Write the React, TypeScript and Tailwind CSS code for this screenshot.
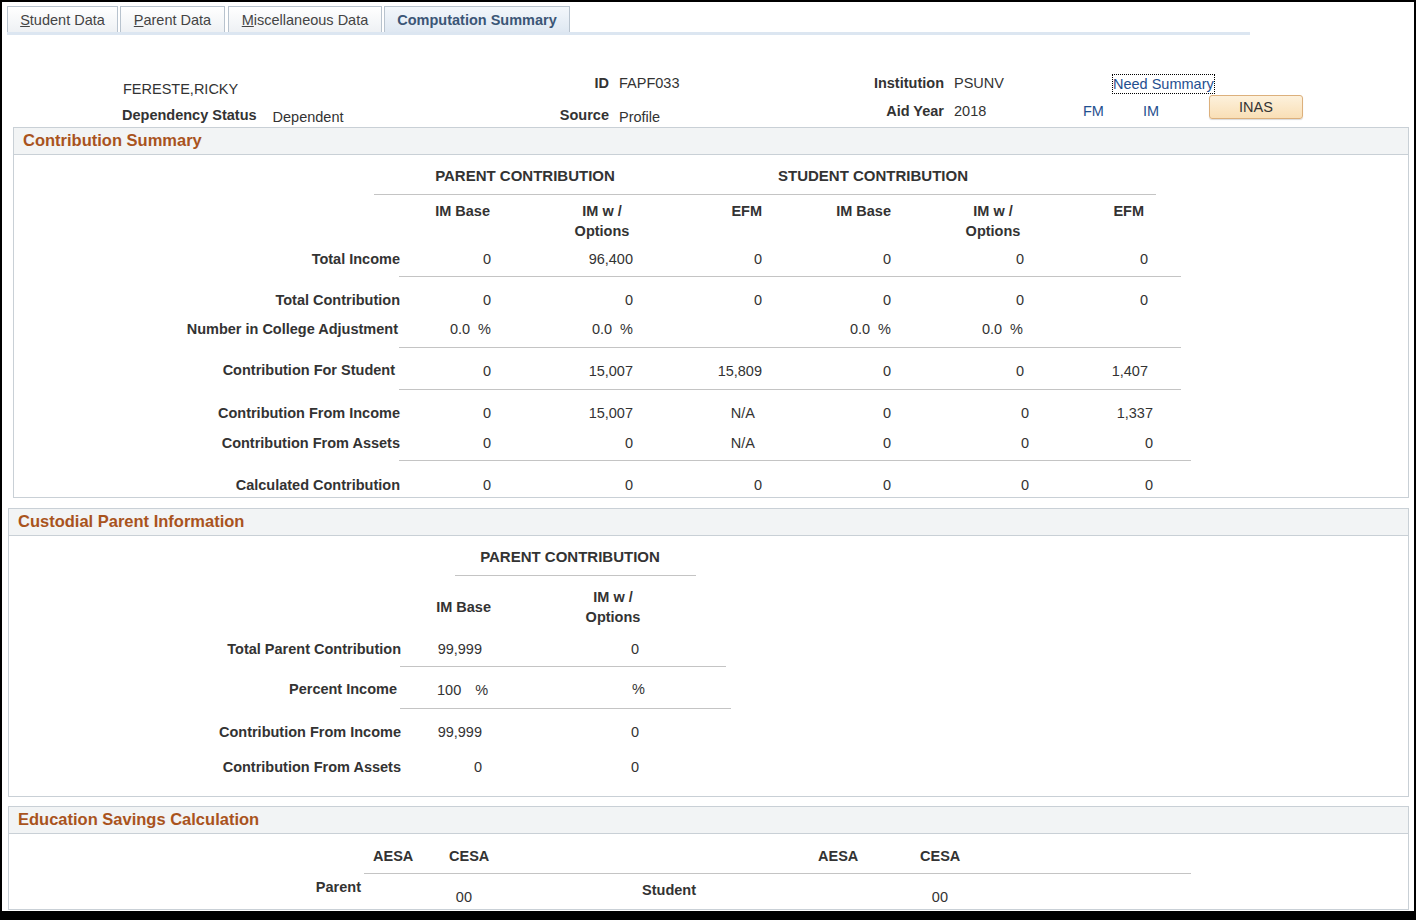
import type { ReactNode } from 'react'

/**
 * Computation Summary page — PeopleSoft style financial aid summary.
 * Tabs, header info, then three bordered sections with right aligned grids.
 */

const CS_COLS = ['w-[91px]', 'w-[142px]', 'w-[129px]', 'w-[129px]', 'w-[133px]', 'w-[124px]']
const CS_COLS_WIDE = ['w-[91px]', 'w-[142px]', 'w-[129px]', 'w-[129px]', 'w-[138px]', 'w-[124px]']

function Section({ title, className, children }: { title: string; className: string; children: ReactNode }) {
  return (
    <section className={`border border-[#c9d0d6] ${className}`}>
      <div className="flex h-[27px] items-center border-b border-[#c9d0d6] bg-[#f2f4f5] pb-[2px] pl-[9px] text-[16.5px] font-bold text-[#a9531d]">
        {title}
      </div>
      {children}
    </section>
  )
}

function CsRow({
  label,
  values,
  cols = CS_COLS,
  labelClass = '',
  className = '',
}: {
  label: string
  values: ReactNode[]
  cols?: string[]
  labelClass?: string
  className?: string
}) {
  return (
    <div className={`flex h-5 items-center leading-5 ${className}`}>
      <div className={`w-[386px] text-right font-bold ${labelClass}`}>{label}</div>
      {values.map((v, i) => (
        <div key={i} className={`${cols[i]} whitespace-nowrap text-right`}>
          {v}
        </div>
      ))}
    </div>
  )
}

function Pct({ v }: { v: string }) {
  return (
    <>
      <span>{v}</span>
      <span className="ml-2">%</span>
    </>
  )
}

function Rule({ className }: { className: string }) {
  return <div className={`border-t border-[#c4c4c4] ${className}`} />
}

function Tabs() {
  const tab = 'flex h-[26px] items-center justify-center border border-b-0 border-[#b8c3ce] pt-[2px]'
  return (
    <div className="ml-[5px] mt-[4px] w-[1243px]">
      <div className="flex items-end">
        <div className={`${tab} w-[111px] bg-gradient-to-b from-white to-[#eef1f4] text-[#444]`}>
          <span><span className="underline">S</span>tudent Data</span>
        </div>
        <div className={`${tab} ml-[2px] w-[105px] bg-gradient-to-b from-white to-[#eef1f4] text-[#444]`}>
          <span><span className="underline">P</span>arent Data</span>
        </div>
        <div className={`${tab} ml-[3px] w-[154px] bg-gradient-to-b from-white to-[#eef1f4] text-[#444]`}>
          <span><span className="underline">M</span>iscellaneous Data</span>
        </div>
        <div className={`${tab} ml-[2px] w-[186px] bg-gradient-to-b from-[#f3f7fb] to-[#dfe8f2] font-bold text-[#3b5676]`}>
          Computation Summary
        </div>
      </div>
      <div className="h-[3px] bg-[#dce6f1]" />
    </div>
  )
}

function HeaderInfo() {
  return (
    <div className="flex h-[92px] items-start leading-4">
      {/* Name + dependency */}
      <div className="ml-[120px] w-[418px] pt-[46px]">
        <div className="pl-px">FERESTE,RICKY</div>
        <div className="mt-[10px] flex items-start">
          <span className="font-bold">Dependency Status</span>
          <span className="ml-[16px] mt-[2px]">Dependent</span>
        </div>
      </div>

      {/* ID / Source */}
      <div className="w-[300px] pt-[40px]">
        <div className="flex">
          <span className="w-[69px] text-right font-bold">ID</span>
          <span className="ml-[10px]">FAPF033</span>
        </div>
        <div className="mt-[16px] flex items-start">
          <span className="w-[69px] text-right font-bold">Source</span>
          <span className="ml-[10px] mt-[2px]">Profile</span>
        </div>
      </div>

      {/* Institution / Aid year */}
      <div className="w-[243px] pt-[40px]">
        <div className="flex">
          <span className="w-[104px] text-right font-bold">Institution</span>
          <span className="ml-[10px]">PSUNV</span>
        </div>
        <div className="mt-[12px] flex">
          <span className="w-[104px] text-right font-bold">Aid Year</span>
          <span className="ml-[10px]">2018</span>
        </div>
      </div>

      {/* Links + INAS */}
      <div className="pt-[39px]">
        <div className="ml-[29px] inline-block h-5 border border-dotted border-black leading-[18px] text-[#1f4f8f]">
          Need Summary
        </div>
        <div className="flex items-start">
          <span className="mt-[9px] w-[60px] text-[#1f4f8f]">FM</span>
          <span className="mt-[9px] w-[66px] text-[#1f4f8f]">IM</span>
          <button className="mt-px flex h-6 w-[94px] items-center justify-center rounded-[3px] border border-[#dcb07c] bg-gradient-to-b from-[#fdf1dc] to-[#f9dfb6] text-[#333] shadow-[0_1px_1px_rgba(0,0,0,0.15)]">
            INAS
          </button>
        </div>
      </div>
    </div>
  )
}

function ContributionSummary() {
  return (
    <Section title="Contribution Summary" className="ml-[11px] mr-[5px] h-[371px]">
      <div className="mt-[11px] flex h-5 items-center text-[15px] font-bold leading-5">
        <div className="w-[360px]" />
        <div className="w-[302px] text-center">PARENT CONTRIBUTION</div>
        <div className="w-[394px] text-center">STUDENT CONTRIBUTION</div>
      </div>
      <Rule className="ml-[360px] mt-[8px] w-[782px]" />

      <div className="mt-[6px] flex h-10 items-start font-bold leading-5">
        <div className="w-[386px]" />
        <div className="w-[90px] text-right">IM Base</div>
        <div className="w-[224px] text-center">IM w /<br />Options</div>
        <div className="w-[48px] text-right">EFM</div>
        <div className="w-[129px] text-right">IM Base</div>
        <div className="w-[204px] text-center">IM w /<br />Options</div>
        <div className="w-[49px] text-right">EFM</div>
      </div>

      <CsRow className="mt-[8px]" label="Total Income" values={['0', '96,400', '0', '0', '0', '0']} />
      <Rule className="ml-[385px] mt-[7px] w-[782px]" />
      <CsRow className="mt-[13px]" label="Total Contribution" values={['0', '0', '0', '0', '0', '0']} />
      <CsRow
        className="mt-[9px]"
        labelClass="pr-[2px]"
        label="Number in College Adjustment"
        values={[<Pct v="0.0" />, <Pct v="0.0" />, '', <Pct v="0.0" />, <span className="pr-px"><Pct v="0.0" /></span>, '']}
      />
      <Rule className="ml-[385px] mt-[8px] w-[782px]" />
      <CsRow
        className="mt-[13px]"
        labelClass="pr-[5px] -mt-[3px]"
        label="Contribution For Student"
        values={['0', '15,007', '15,809', '0', '0', '1,407']}
      />
      <Rule className="ml-[385px] mt-[8px] w-[782px]" />
      <CsRow
        className="mt-[13px]"
        cols={CS_COLS_WIDE}
        label="Contribution From Income"
        values={['0', '15,007', <span className="pr-[7px]">N/A</span>, '0', '0', '1,337']}
      />
      <CsRow
        className="mt-[10px]"
        cols={CS_COLS_WIDE}
        label="Contribution From Assets"
        values={['0', '0', <span className="pr-[7px]">N/A</span>, '0', '0', '0']}
      />
      <Rule className="ml-[385px] mt-[7px] w-[792px]" />
      <CsRow
        className="mt-[14px]"
        cols={CS_COLS_WIDE}
        label="Calculated Contribution"
        values={['0', '0', '0', '0', '0', '0']}
      />
    </Section>
  )
}

function CpRow({ label, a, b, className, labelClass = '' }: { label: string; a: ReactNode; b: ReactNode; className: string; labelClass?: string }) {
  return (
    <div className={`flex h-5 items-center leading-5 ${className}`}>
      <div className={`w-[392px] text-right font-bold ${labelClass}`}>{label}</div>
      <div className="w-[81px] text-right">{a}</div>
      <div className="w-[157px] text-right">{b}</div>
    </div>
  )
}

function CustodialParent() {
  return (
    <Section title="Custodial Parent Information" className="ml-[6px] mr-[5px] mt-[10px] h-[289px]">
      <div className="mt-[11px] flex h-5 items-center text-[15px] font-bold leading-5">
        <div className="w-[441px]" />
        <div className="w-[240px] text-center">PARENT CONTRIBUTION</div>
      </div>
      <Rule className="ml-[446px] mt-[8px] w-[241px]" />

      <div className="mt-[11px] flex h-10 items-center font-bold leading-5">
        <div className="w-[392px]" />
        <div className="w-[90px] text-right">IM Base</div>
        <div className="w-[244px] text-center">IM w /<br />Options</div>
      </div>

      <CpRow className="mt-[12px]" label="Total Parent Contribution" a="99,999" b="0" />
      <Rule className="ml-[391px] mt-[7px] w-[326px]" />
      <div className="mt-[12px] flex h-5 items-center leading-5">
        <div className="w-[392px] pr-[4px] text-right font-bold">Percent Income</div>
        <div className="w-[81px] whitespace-nowrap pl-[36px]">
          <span className="mt-[2px] inline-block">100</span>
          <span className="ml-[14px]">%</span>
        </div>
        <div className="w-[157px] pl-[150px]">%</div>
      </div>
      <Rule className="ml-[391px] mt-[9px] w-[331px]" />
      <CpRow className="mt-[13px]" label="Contribution From Income" a="99,999" b="0" />
      <CpRow className="mt-[15px]" label="Contribution From Assets" a="0" b="0" />
    </Section>
  )
}

function EducationSavings() {
  return (
    <Section title="Education Savings Calculation" className="ml-[6px] mr-[5px] mt-[9px] h-[104px]">
      <div className="mt-[12px] flex h-5 items-center font-bold leading-5">
        <div className="w-[364px]" />
        <div className="w-[76px]">AESA</div>
        <div className="w-[369px]">CESA</div>
        <div className="w-[102px]">AESA</div>
        <div>CESA</div>
      </div>
      <Rule className="ml-[355px] mt-[7px] w-[827px]" />
      <div className="flex items-start leading-5">
        <div className="mt-[3px] w-[352px] text-right font-bold">Parent</div>
        <div className="mt-[13px] w-[111px] text-right">00</div>
        <div className="mt-[6px] w-[224px] text-right font-bold">Student</div>
        <div className="mt-[13px] w-[252px] text-right">00</div>
      </div>
    </Section>
  )
}

export default function App() {
  return (
    <div className="h-[920px] w-[1416px] overflow-hidden border-b-[9px] border-l-2 border-r-2 border-t-2 border-solid border-black bg-white font-['Liberation_Sans',Arial,sans-serif] text-[14.5px] text-[#333]">
      <Tabs />
      <HeaderInfo />
      <ContributionSummary />
      <CustodialParent />
      <EducationSavings />
    </div>
  )
}
